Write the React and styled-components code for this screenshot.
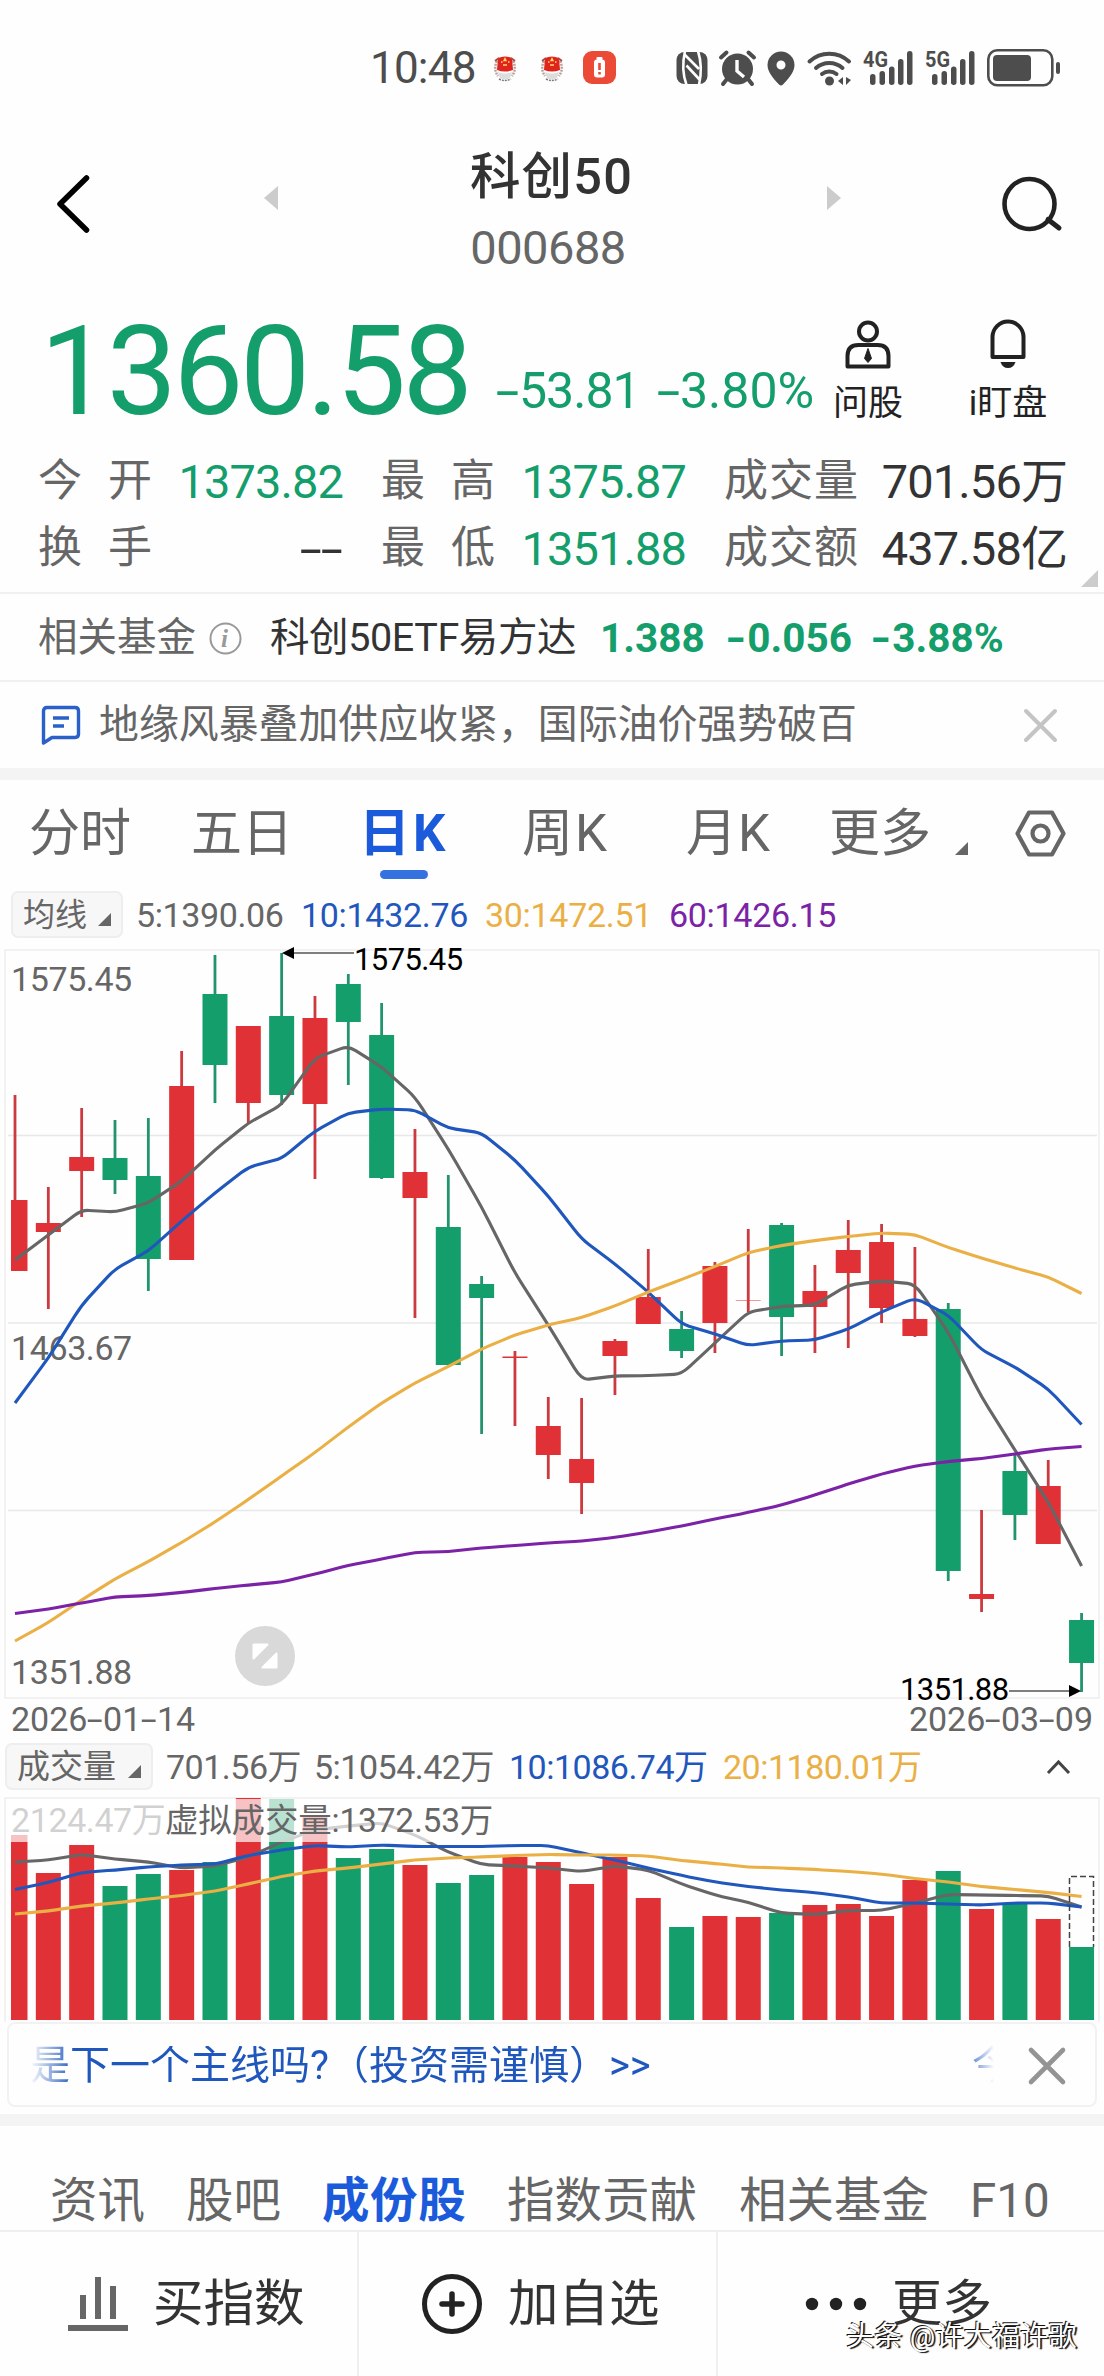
import React from 'react'
import styled, { createGlobalStyle, css } from 'styled-components'

const RED = '#e03236'
const GREEN = '#149e6b'
const BLUE = '#1f57bd'
const ORANGE = '#eab045'
const PURPLE = '#7b22a6'
const GREY = '#666'

const GlobalStyle = createGlobalStyle`
    *{
        box-sizing:border-box;
    }
    body{
        margin:0;
        background-color:#fefefe;
        font-family:Roboto, "Noto Sans CJK SC", sans-serif;
        color:#333;
    }
    svg{
        display:block;
        flex:none;
        overflow:visible;
    }
`;

const Container = styled.div`
    width:1104px;
    height:2376px;
    overflow:hidden;
    background-color:#fefefe;
`;

const Text = styled.span`
    flex:none;
    display:block;
    white-space:nowrap;
    line-height:1;
    font-size:${props => props.$size}px;
    font-weight:${props => props.$weight || 400};
    color:${props => props.$color || 'inherit'};
    letter-spacing:${props => props.$spacing || 0}px;
    width:${props => props.$width ? props.$width + 'px' : 'auto'};
`;

const Spacer = styled.div`
    flex:none;
    width:${props => props.$w}px;
`;

// minus signs are drawn wider than the font's hyphen
const Dash = styled.span`
    display:inline-block;
    width:${props => props.$wide ? 0.55 : 0.46}em;
    text-align:center;
    letter-spacing:0;
    transform:scaleX(${props => props.$wide ? 1.35 : 1.7});
`;

const Num = ({ children, wide }) => (
    <>
        {children.split('').map((c, i) => (c === '-' ? <Dash key={i} $wide={wide}>-</Dash> : c))}
    </>
)

/* ---------- status bar ---------- */

const StatusBar = styled.div`
    height:136px;
    display:flex;
    align-items:center;
    padding-left:370px;
`;
const Notifications = styled.div`
    display:flex;
    align-items:center;
    gap:23px;
    margin-left:9px;
    & > :last-child{
        margin-left:-4px;
    }
`;
const StatusIcons = styled.div`
    display:flex;
    align-items:center;
    margin-left:59px;
`;

/* ---------- header ---------- */

const Header = styled.header`
    height:152px;
    display:flex;
    align-items:flex-start;
`;
const HeaderSlot = styled.div`
    flex:none;
    width:${props => props.$width}px;
    height:${props => props.$height || 136}px;
    padding-left:${props => props.$pad}px;
    display:flex;
    align-items:center;
`;
const TitleBlock = styled.div`
    width:440px;
    flex:none;
    display:flex;
    flex-direction:column;
    align-items:center;
`;
const Title = styled.h1`
    margin:0 5px 0 0;
    font-size:50.5px;
    line-height:82px;
    font-weight:500;
    letter-spacing:1.2px;
    color:#333;
`;
const Code = styled.div`
    margin-right:12px;
    font-size:47px;
    line-height:60px;
    letter-spacing:-0.5px;
    color:#666;
`;

/* ---------- quote ---------- */

const Quote = styled.section`
    height:160px;
    display:flex;
    padding-left:40px;
    color:${GREEN};
`;
const Price = styled.div`
    flex:none;
    width:456px;
    font-size:125px;
    line-height:168px;
    letter-spacing:-3.6px;
`;
const Change = styled.div`
    flex:none;
    width:${props => props.$width}px;
    padding-top:20px;
    font-size:50px;
    line-height:167px;
    letter-spacing:${props => props.$spacing}px;
    white-space:nowrap;
`;
const QuoteAction = styled.div`
    flex:none;
    width:${props => props.$width}px;
    padding-top:${props => props.$top}px;
    display:flex;
    flex-direction:column;
    align-items:center;
    gap:17px;
    color:#222;
`;

const Stats = styled.section`
    height:146px;
    padding-left:38px;
    display:grid;
    grid-template-columns:343px 343px 380px;
    grid-template-rows:67px 67px;
    border-bottom:2px solid #f0f0f0;
    position:relative;
`;
const Stat = styled.div`
    display:flex;
    align-items:center;
`;
const StatLabel = styled.span`
    width:${props => props.$wide ? 134 : 114}px;
    margin-top:-2px;
    font-size:44px;
    line-height:1;
    color:#666;
    text-align-last:justify;
    white-space:nowrap;
    flex:none;
`;
const StatValue = styled.span`
    width:${props => props.$wide ? 209 : 191}px;
    text-align:right;
    font-size:47px;
    line-height:1;
    letter-spacing:-0.9px;
    white-space:nowrap;
    color:${props => props.$plain ? '#333' : GREEN};
`;
const Corner = styled.div`
    position:absolute;
    right:6px;
    bottom:5px;
    border-bottom:17px solid #ccc;
    border-left:17px solid transparent;
`;

/* ---------- fund & news ---------- */

const Row = styled.div`
    display:flex;
    align-items:center;
    height:86px;
    padding-left:${props => props.$left}px;
    ${props => props.$line && css`
        height:88px;
        padding-top:2px;
        border-bottom:2px solid #f0f0f0;
    `}
`;
const Band = styled.div`
    height:12px;
    background-color:#f4f4f4;
`;

/* ---------- tabs ---------- */

const PeriodTabs = styled.nav`
    height:111px;
    display:flex;
    padding-left:29px;
    color:#666;
`;
const PeriodTab = styled.div`
    flex:none;
    width:${props => props.$width}px;
    font-size:51px;
    line-height:108px;
    letter-spacing:${props => props.$spacing || 0}px;
    font-weight:${props => props.$active ? 700 : 400};
    color:${props => props.$active ? '#1b5bdb' : '#666'};
    &::after{
        content:"";
        display:${props => props.$active ? 'block' : 'none'};
        width:48px;
        height:9px;
        margin:-18px 0 0 21px;
        border-radius:5px;
        background-color:#3572e0;
    }
`;
const TabMark = styled.div`
    flex:none;
    width:${props => props.$width}px;
    padding-top:${props => props.$top}px;
`;
const Triangle = styled.i`
    display:block;
    flex:none;
    width:0;
    border-bottom:13px solid #666;
    border-left:13px solid transparent;
`;

/* ---------- indicators ---------- */

const Indicators = styled.div`
    display:flex;
    align-items:center;
    height:47px;
    padding-left:${props => props.$left}px;
    margin-bottom:${props => props.$bottom}px;
`;
const Chip = styled.div`
    flex:none;
    width:${props => props.$width}px;
    height:47px;
    display:flex;
    align-items:center;
    justify-content:space-between;
    padding:0 10px 0 10px;
    margin-right:${props => props.$gap}px;
    border:2px solid #eee;
    border-radius:7px;
    background-color:#f7f7f7;
    color:#666;
    & > i{
        margin-top:9px;
    }
`;
const Dates = styled.div`
    height:44px;
    padding:3px 11px 0 11px;
    display:flex;
    justify-content:space-between;
    color:#666;
`;

/* ---------- banner ---------- */

const Banner = styled.div`
    display:flex;
    align-items:center;
    height:85px;
    margin:0 7px 7px 7px;
    padding:2px 0 0 21px;
    border:2px solid #f2f2f2;
    border-radius:8px;
    color:${BLUE};
`;
const Marquee = styled.div`
    flex:none;
    width:964px;
    display:flex;
    mask-image:linear-gradient(90deg, transparent, #000 44px, #000 932px, transparent 964px);
`;

/* ---------- bottom ---------- */

const InfoTabs = styled.nav`
    display:flex;
    height:106px;
    padding:52px 0 0 50px;
    border-bottom:2px solid #efefef;
    color:#666;
`;
const BottomBar = styled.footer`
    display:grid;
    grid-template-columns:359px 359px 386px;
    height:144px;
    position:relative;
`;
const BottomItem = styled.div`
    display:flex;
    align-items:center;
    padding-left:${props => props.$pad}px;
    gap:${props => props.$gap}px;
    border-right:${props => props.$last ? 'none' : '2px solid #efefef'};
`;
const Watermark = styled.div`
    position:absolute;
    left:846px;
    top:91px;
    font-size:28px;
    line-height:1;
    letter-spacing:0.3px;
    white-space:nowrap;
    color:#fff;
    text-shadow:-1px -1px 0 #111, 2px 1px 1px #111;
`;

/* ---------- data ---------- */

const STEP = 33.33
const cx = i => 15 + i * STEP

// [up, high, low, bodyTop, bodyBottom]
const candles = [
    [1, 1095, 1271, 1200, 1271],
    [1, 1187, 1309, 1223, 1232],
    [1, 1108, 1217, 1157, 1171],
    [0, 1120, 1194, 1158, 1180],
    [0, 1118, 1291, 1176, 1259],
    [1, 1051, 1260, 1086, 1260],
    [0, 955, 1103, 994, 1065],
    [1, 1026, 1123, 1026, 1103],
    [0, 953, 1105, 1016, 1095],
    [1, 996, 1179, 1018, 1104],
    [0, 974, 1085, 984, 1022],
    [0, 1003, 1179, 1035, 1178],
    [1, 1129, 1318, 1172, 1198],
    [0, 1175, 1365, 1227, 1365],
    [0, 1276, 1434, 1284, 1298],
    [1, 1351, 1426, 1356.5, 1358],
    [1, 1397, 1479, 1426, 1455],
    [1, 1398, 1514, 1459, 1483],
    [1, 1339, 1395, 1341, 1356],
    [1, 1249, 1324, 1297, 1324],
    [0, 1311, 1358, 1329, 1351],
    [1, 1262, 1353, 1266, 1323],
    [1, 1229, 1312, 1300.3, 1300.8],
    [0, 1223, 1356, 1225, 1317],
    [1, 1265, 1353, 1291, 1307],
    [1, 1220, 1348, 1250, 1273],
    [1, 1224, 1323, 1242, 1308],
    [1, 1247, 1337, 1319, 1336],
    [0, 1303, 1581, 1309, 1571],
    [1, 1510, 1612, 1594, 1599],
    [0, 1455, 1540, 1471, 1515],
    [1, 1460, 1544, 1486, 1544],
    [0, 1613, 1692, 1620, 1663],
]

const priceLines = [
    [GREY, [1260, 1235, 1210, 1212, 1203, 1181, 1150, 1123, 1105, 1058, 1046, 1067, 1097, 1149, 1207, 1273, 1325, 1380, 1376, 1375.6, 1374, 1343, 1312, 1306.5, 1305, 1285, 1281, 1284, 1332, 1397, 1450, 1502, 1566]],
    [BLUE, [1403, 1358, 1305, 1269, 1251, 1221, 1193, 1167, 1158.5, 1131, 1113, 1109, 1110, 1128, 1133, 1160, 1196, 1239, 1264, 1292, 1324, 1334, 1345.5, 1341, 1340, 1329, 1312, 1298, 1315, 1350, 1367, 1389, 1424.5]],
    [ORANGE, [1641, 1622.5, 1600, 1579, 1561.5, 1542.5, 1522, 1499.5, 1476, 1452.5, 1427, 1403, 1383, 1366.5, 1349, 1335, 1325, 1317.5, 1306, 1292, 1279.5, 1266.5, 1252.5, 1245.5, 1240.5, 1236.5, 1233, 1234.5, 1247.5, 1258, 1268, 1277, 1293.5]],
    [PURPLE, [1613.5, 1609, 1603, 1597, 1595.5, 1592.5, 1588.5, 1585, 1582, 1574, 1565.5, 1559, 1552.5, 1551.5, 1548, 1545.5, 1543, 1541, 1537.5, 1532, 1526, 1519, 1512.5, 1505, 1495, 1484, 1474, 1466, 1461.5, 1458.5, 1454, 1449, 1446.5]],
]

const volumes = [1835, 1873, 1845, 1886, 1874, 1870, 1862, 1798, 1799, 1815, 1858, 1849, 1865, 1883, 1875, 1857, 1862, 1884, 1857, 1898, 1927, 1916, 1917, 1913, 1905, 1904, 1916, 1880, 1871, 1909, 1904, 1919, 1947]

const volumeLines = [
    [GREY, [1862, 1860, 1854.5, 1859, 1862, 1868, 1866, 1857, 1842, 1830, 1826, 1823, 1835, 1852, 1864.5, 1866, 1868, 1871.5, 1866, 1870, 1884, 1895, 1902.5, 1913, 1914.5, 1910.5, 1910.5, 1903, 1894.5, 1895, 1895.5, 1896, 1907]],
    [BLUE, [1889.5, 1882.5, 1872.5, 1870, 1867, 1865, 1864, 1855.5, 1850, 1845.5, 1847, 1845, 1846.5, 1846.5, 1846.5, 1845.5, 1845.5, 1853, 1860, 1868, 1875.5, 1882, 1886.5, 1890, 1892.5, 1897, 1903, 1903, 1904, 1905, 1903, 1903, 1907]],
    [ORANGE, [1914, 1911, 1906, 1903, 1899, 1895.5, 1891, 1884, 1876.5, 1871, 1868, 1864, 1860, 1858, 1857, 1855.5, 1854.5, 1855, 1855, 1856, 1860.5, 1863.5, 1867, 1868, 1869.5, 1871.5, 1874, 1878.5, 1882, 1886.5, 1889.5, 1892.5, 1896.5]],
]

// polyline whose corners are rounded a little
const linePath = ys => {
    const r = 0.22
    let d = `M${cx(0)} ${ys[0]}`
    for (let i = 1; i < ys.length - 1; i++) {
        const x = cx(i)
        d += `L${x - STEP * r} ${ys[i] - (ys[i] - ys[i - 1]) * r}`
        d += `Q${x} ${ys[i]} ${x + STEP * r} ${ys[i] + (ys[i + 1] - ys[i]) * r}`
    }
    return d + `L${cx(ys.length - 1)} ${ys[ys.length - 1]}`
}

const barBox = i => {
    const left = Math.max(cx(i) - 12.5, 11)
    return { x: left, width: cx(i) + 12.5 - left }
}

const PriceChart = () => (
    <svg width="1104" height="750" viewBox="0 949 1104 750">
        <rect x="5" y="950" width="1094" height="748" fill="none" stroke="#f2f2f2" strokeWidth="2" />
        {[1135.5, 1323, 1510.5].map(y => (
            <path key={y} d={`M8 ${y}H1097`} stroke="#e8e8e8" strokeWidth="1.4" />
        ))}
        <g fontSize="34" fill="#666" letterSpacing="-0.4">
            <text x="11" y="991">1575.45</text>
            <text x="11" y="1360">1463.67</text>
            <text x="11" y="1684">1351.88</text>
        </g>
        {candles.map(([up, high, low, top, bottom], i) => (
            <g key={i} fill={up ? RED : GREEN}>
                <rect x={cx(i) - 1.4} y={high} width="2.8" height={low - high} fill={up ? '#cc3a40' : '#23936b'} />
                <rect {...barBox(i)} y={top} height={bottom - top} />
            </g>
        ))}
        {priceLines.map(([color, ys]) => (
            <path key={color} d={linePath(ys)} fill="none" stroke={color} strokeWidth="3.1" />
        ))}
        <g stroke="#555" strokeWidth="1.6">
            <path d="M292 953H354" />
            <path d="M1009 1691H1070" />
        </g>
        <path d="M282 953l12-6v12zM1081 1691l-12-6v12z" fill="#000" />
        <g fontSize="31" fill="#000" letterSpacing="-0.6">
            <text x="354" y="970">1575.45</text>
            <text x="900" y="1700">1351.88</text>
        </g>
        <circle cx="265" cy="1656" r="30" fill="#d9d9d9" />
        <path d="M253.5 1644.5h14l-14 14zM276.5 1667.5h-14l14-14z" fill="#fff" stroke="#fff" strokeWidth="2" strokeLinejoin="round" />
    </svg>
)

const VolumeChart = () => (
    <svg width="1104" height="225" viewBox="0 1797 1104 225">
        <path d="M5 2022V1798H1099V2022" fill="none" stroke="#f2f2f2" strokeWidth="2" />
        <text x="11" y="1832" fontSize="34" fill="#666" letterSpacing="-0.4">2124.47万</text>
        {volumes.map((y, i) => (
            <rect key={i} {...barBox(i)} y={y} height={2020 - y} fill={candles[i][0] ? RED : GREEN} />
        ))}
        {volumeLines.map(([color, ys]) => (
            <path key={color} d={linePath(ys)} fill="none" stroke={color} strokeWidth="3.1" />
        ))}
        <path d="M1069.5 1947V1876.5H1093.5V1947" fill="none" stroke="#444" strokeWidth="1.5" strokeDasharray="6 3" />
        <rect x="8" y="1799" width="484" height="43" fill="#fff" fillOpacity="0.7" />
        <text x="165" y="1832" fontSize="33.5" fill="#666" letterSpacing="-0.2">虚拟成交量:1372.53万</text>
    </svg>
)

const Emblem = () => (
    <svg width="24" height="28" viewBox="0 0 24 28">
        <path d="M4 7q-4 8 1 15M20 7q4 8-1 15" fill="none" stroke="#b9a19c" strokeWidth="2.5" strokeDasharray="2 1" />
        <path d="M5 4q7-3 14 0l1 12q-8 3-16 0z" fill="#e0231c" />
        <path d="M2 7l4-3M22 7l-4-3" stroke="#b5463c" strokeWidth="2" />
        <path d="M12 4.5l1 2h-2zM8 8h1.5M15 8h1.5M10 11h4" stroke="#ffd76a" strokeWidth="1.3" />
        <path d="M5 18q7 3 14 0l-2 6q-5 3-10 0z" fill="#ddd" />
        <path d="M6 25q6 3 12 0" fill="none" stroke="#777" strokeWidth="1.5" strokeDasharray="2 1" />
    </svg>
)

const BatteryAlert = () => (
    <svg width="34" height="34" viewBox="0 0 34 34">
        <rect width="33" height="33" rx="9" fill="#ea4a36" />
        <rect x="11" y="8.5" width="11" height="18" rx="3" fill="#fff" />
        <rect x="13.5" y="6" width="6" height="3" rx="1" fill="#fff" />
        <path d="M16.5 12v7M16.5 21v2.5" stroke="#ea4a36" strokeWidth="2.6" />
    </svg>
)

const SignalBars = ({ label }) => (
    <svg width="51" height="36" viewBox="0 0 51 36" fill="#4d4d4d">
        <text x="0" y="17" fontSize="22" fontWeight="700" textLength="25" lengthAdjust="spacingAndGlyphs">{label}</text>
        {[[7, 24], [16.5, 21], [26, 16.5], [35, 9], [44, 1]].map(([x, y]) => (
            <rect key={x} x={x} y={y} width="5.5" height={35 - y} rx="2.7" />
        ))}
    </svg>
)

const NfcIcon = () => (
    <svg width="32" height="34" viewBox="0 0 32 34">
        <rect x="0.5" y="1" width="31" height="32" rx="8" fill="#4d4d4d" />
        <path d="M9 0c-2.500 11-2.500 23 1.500 34M8 3l15 15M10.500 14.500l13 14M22 0c3.500 11 3.500 23 1 34" fill="none" stroke="#fefefe" strokeWidth="2.6" />
    </svg>
)

const AlarmIcon = () => (
    <svg width="37" height="36" viewBox="0 0 37 36">
        <circle cx="18.5" cy="19" r="15.5" fill="#4d4d4d" />
        <path d="M2 7.5l5.500-5M35 7.5l-5.500-5M8 29l-4 5M29 29l4 5" stroke="#4d4d4d" strokeWidth="4" strokeLinecap="round" />
        <path d="M18 10v11l7 6" fill="none" stroke="#fefefe" strokeWidth="3.4" />
    </svg>
)

const PinIcon = () => (
    <svg width="28" height="35" viewBox="0 0 28 35">
        <path fillRule="evenodd" d="M14 .5a13.500 13.500 0 0 1 13.500 13.500c0 8-7.500 15-11.500 19.500q-2 2-4 0c-4-4.500-11.500-11.500-11.500-19.500a13.500 13.500 0 0 1 13.500-13.500zM14 9.500a4.500 4.500 0 1 0 0 9a4.500 4.500 0 1 0 0-9z" fill="#4d4d4d" />
    </svg>
)

const WifiIcon = () => (
    <svg width="45" height="36" viewBox="0 0 45 36">
        <g fill="none" stroke="#4d4d4d" strokeWidth="4" strokeLinecap="round">
            <path d="M2.5 11.5a29 29 0 0 1 39.500 0" />
            <path d="M9 18a20 20 0 0 1 26.500 0" />
            <path d="M15 24a11.500 11.500 0 0 1 14.500 0" />
        </g>
        <circle cx="22.5" cy="31" r="4.5" fill="#4d4d4d" />
        <path d="M36 27v8l-5-4zM39 27v8l5-5z" fill="#4d4d4d" />
    </svg>
)

const BatteryIcon = () => (
    <svg width="73" height="38" viewBox="0 0 73 38">
        <rect x="1.3" y="1.3" width="64" height="35" rx="9" fill="none" stroke="#4d4d4d" strokeWidth="2.6" />
        <rect x="6" y="6" width="38" height="26" rx="4" fill="#4d4d4d" />
        <rect x="69" y="13" width="4" height="12" rx="2" fill="#4d4d4d" />
    </svg>
)

const stats = [
    ['今 开', '1373.82'],
    ['最 高', '1375.87'],
    ['成交量', '701.56万', true],
    ['换 手', '--', false, true],
    ['最 低', '1351.88'],
    ['成交额', '437.58亿', true],
]

// [name, width, letter spacing]
const periods = [
    ['分时', 162],
    ['五日', 168],
    ['日K', 163, 3],
    ['周K', 164, 2],
    ['月K', 143, 1],
    ['更多', 126],
]

const infoTabs = [
    ['资讯', 136],
    ['股吧', 136],
    ['成份股', 185],
    ['指数贡献', 232],
    ['相关基金', 231],
    ['F10', 100],
]

const App = () => {
    return (
        <Container>
            <GlobalStyle />
            <StatusBar>
                <Text $size={44} $color="#4d4d4d" $width={114} $spacing={-0.8}>10:48</Text>
                <Notifications>
                    <Emblem />
                    <Emblem />
                    <BatteryAlert />
                </Notifications>
                <StatusIcons>
                    <NfcIcon />
                    <Spacer $w={11} />
                    <AlarmIcon />
                    <Spacer $w={11} />
                    <PinIcon />
                    <Spacer $w={12} />
                    <WifiIcon />
                    <Spacer $w={11} />
                    <SignalBars label="4G" />
                    <Spacer $w={11} />
                    <SignalBars label="5G" />
                    <Spacer $w={11} />
                    <BatteryIcon />
                </StatusIcons>
            </StatusBar>

            <Header>
                <HeaderSlot $width={264} $pad={56}>
                    <svg width="34" height="60" viewBox="0 0 34 60">
                        <path d="M30.5 4L4 30l26.500 26" fill="none" stroke="#000" strokeWidth="5.5" strokeLinecap="round" strokeLinejoin="round" />
                    </svg>
                </HeaderSlot>
                <HeaderSlot $width={70} $pad={0} $height={124}>
                    <svg width="14" height="24" viewBox="0 0 14 24"><path d="M14 0v24L0 12z" fill="#ccc" /></svg>
                </HeaderSlot>
                <TitleBlock>
                    <Title>科创50</Title>
                    <Code>000688</Code>
                </TitleBlock>
                <HeaderSlot $width={227} $pad={53} $height={124}>
                    <svg width="14" height="24" viewBox="0 0 14 24"><path d="M0 0v24L14 12z" fill="#ccc" /></svg>
                </HeaderSlot>
                <HeaderSlot $width={100} $pad={0}>
                    <svg width="62" height="56" viewBox="0 0 62 56">
                        <circle cx="28.5" cy="28" r="25" fill="none" stroke="#222" strokeWidth="4.6" />
                        <path d="M47 43.500l11 8.500" stroke="#222" strokeWidth="5" strokeLinecap="round" />
                    </svg>
                </HeaderSlot>
            </Header>

            <Quote>
                <Price>1360.58</Price>
                <Change $width={161} $spacing={-1}><Num>-53.81</Num></Change>
                <Change $width={167} $spacing={0}><Num>-3.80%</Num></Change>
                <QuoteAction $width={88} $top={32}>
                    <svg width="46" height="49" viewBox="0 0 46 49" fill="none" stroke="#222" strokeWidth="4">
                        <circle cx="23" cy="11.5" r="9" />
                        <path d="M2.5 46.5V36q0-11 11-11h19q11 0 11 11v10.500z" strokeLinejoin="round" />
                        <path d="M23 28.500l3.500 10-3.500 4-3.500-4z" fill="#222" strokeWidth="1" />
                    </svg>
                    <Text $size={35}>问股</Text>
                </QuoteAction>
                <QuoteAction $width={192} $top={31}>
                    <svg width="38" height="50" viewBox="0 0 38 50">
                        <path d="M3.5 38V18a15.500 15.500 0 0 1 31 0v20z" fill="none" stroke="#222" strokeWidth="4" strokeLinejoin="round" />
                        <path d="M11.5 43h15q-2 6-7.500 6t-7.500-6z" fill="#222" />
                    </svg>
                    <Text $size={35}>i盯盘</Text>
                </QuoteAction>
            </Quote>

            <Stats>
                {stats.map(([label, value, wide, plain]) => (
                    <Stat key={label}>
                        <StatLabel $wide={wide}>{label}</StatLabel>
                        <StatValue $wide={wide} $plain={wide || plain}><Num>{value}</Num></StatValue>
                    </Stat>
                ))}
                <Corner />
            </Stats>

            <Row $line $left={38}>
                <Text $size={39.5} $color="#666" $width={171}>相关基金</Text>
                <svg width="33" height="33" viewBox="0 0 33 33">
                    <circle cx="16.5" cy="16.5" r="15" fill="none" stroke="#999" strokeWidth="2" />
                    <text x="12" y="25" fontSize="25" fontFamily="Liberation Serif, serif" fontStyle="italic" fontWeight="700" fill="#999">i</text>
                </svg>
                <Spacer $w={28} />
                <Text $size={39.5} $width={330} $spacing={-0.4}>科创50ETF易方达</Text>
                <Text $size={40.5} $weight={700} $color={GREEN} $width={125}>1.388</Text>
                <Text $size={40.5} $weight={700} $color={GREEN} $width={145}><Num wide>-0.056</Num></Text>
                <Text $size={40.5} $weight={700} $color={GREEN}><Num wide>-3.88%</Num></Text>
            </Row>
            <Row $left={41}>
                <svg width="40" height="40" viewBox="0 0 40 40" fill="none" stroke="#2a60c8" strokeWidth="3.4" strokeLinejoin="round">
                    <path d="M2.5 38V6q0-3.500 3.500-3.500h28q3.500 0 3.500 3.500v23q0 3.500-3.500 3.500H11z" />
                    <path d="M12 13h16M12 21h11" />
                </svg>
                <Spacer $w={18} />
                <Text $size={39.9} $color="#666" $width={925}>地缘风暴叠加供应收紧，国际油价强势破百</Text>
                <svg width="33" height="33" viewBox="0 0 33 33">
                    <path d="M2 2l29 29M31 2L2 31" stroke="#c4c4c4" strokeWidth="4" strokeLinecap="round" />
                </svg>
            </Row>

            <Band />

            <PeriodTabs>
                {periods.map(([name, width, spacing], i) => (
                    <PeriodTab key={name} $width={width} $spacing={spacing} $active={i === 2}>{name}</PeriodTab>
                ))}
                <TabMark $width={60} $top={62}>
                    <Triangle />
                </TabMark>
                <TabMark $width={60} $top={30}>
                    <svg width="51" height="47" viewBox="1 0 51 47" fill="none" stroke="#666" strokeWidth="4.2" strokeLinejoin="round">
                        <path d="M15 2.500h23l11.500 21-11.500 21h-23l-11.500-21z" />
                        <circle cx="26.5" cy="23.5" r="8" />
                    </svg>
                </TabMark>
            </PeriodTabs>

            <Indicators $left={11} $bottom={11}>
                <Chip $width={112} $gap={13}>
                    <Text $size={32}>均线</Text>
                    <Triangle />
                </Chip>
                <Text $size={34} $color={GREY} $width={165} $spacing={-0.4}>5:1390.06</Text>
                <Text $size={34} $color={BLUE} $width={184} $spacing={-0.3}>10:1432.76</Text>
                <Text $size={34} $color={ORANGE} $width={184} $spacing={-0.3}>30:1472.51</Text>
                <Text $size={34} $color={PURPLE} $spacing={-0.3}>60:1426.15</Text>
            </Indicators>

            <PriceChart />
            <Dates>
                <Text $size={34} $spacing={0}><Num>2026-01-14</Num></Text>
                <Text $size={34} $spacing={0}><Num>2026-03-09</Num></Text>
            </Dates>

            <Indicators $left={5} $bottom={7}>
                <Chip $width={148} $gap={13}>
                    <Text $size={33}>成交量</Text>
                    <Triangle />
                </Chip>
                <Text $size={34} $color={GREY} $width={148} $spacing={-0.5}>701.56万</Text>
                <Text $size={34} $color={GREY} $width={195} $spacing={-0.5}>5:1054.42万</Text>
                <Text $size={34} $color={BLUE} $width={214} $spacing={-0.5}>10:1086.74万</Text>
                <Text $size={34} $color={ORANGE} $width={323} $spacing={-0.5}>20:1180.01万</Text>
                <svg width="24" height="16" viewBox="0 0 24 16">
                    <path d="M2 14L12.500 3 23 14" fill="none" stroke="#444" strokeWidth="3" />
                </svg>
            </Indicators>
            <VolumeChart />

            <Banner>
                <Marquee>
                    <Text $size={40} $width={942}>是下一个主线吗?（投资需谨慎）&gt;&gt;</Text>
                    <Text $size={40}>今</Text>
                </Marquee>
                <Spacer $w={35} />
                <svg width="36" height="36" viewBox="0 0 36 36">
                    <path d="M2 2l32 32M34 2L2 34" stroke="#949494" strokeWidth="4.6" strokeLinecap="round" />
                </svg>
            </Banner>

            <Band />

            <InfoTabs>
                {infoTabs.map(([name, width], i) => (
                    <Text
                        key={name}
                        $size={47.5}
                        $width={width}
                        $spacing={i === 2 ? 0.6 : 0}
                        $weight={i === 2 ? 700 : 400}
                        $color={i === 2 ? '#1b5bdb' : '#666'}
                    >
                        {name}
                    </Text>
                ))}
            </InfoTabs>

            <BottomBar>
                <BottomItem $pad={68} $gap={25}>
                    <svg width="60" height="56" viewBox="0 0 60 56" fill="#666">
                        <path d="M12 19h6v24h-6zM27 1h6v42h-6zM42 10h6v33h-6zM0 49h60v6H0z" />
                    </svg>
                    <Text $size={50.5}>买指数</Text>
                </BottomItem>
                <BottomItem $pad={62} $gap={25}>
                    <svg width="62" height="62" viewBox="0 0 62 62" fill="none" stroke="#222">
                        <circle cx="31" cy="31" r="27.5" strokeWidth="5" />
                        <path d="M31 21v20M21 31h20" strokeWidth="5.5" strokeLinecap="round" />
                    </svg>
                    <Text $size={50.5}>加自选</Text>
                </BottomItem>
                <BottomItem $pad={87} $gap={26} $last>
                    <svg width="61" height="14" viewBox="0 0 61 14" fill="#222">
                        <circle cx="7" cy="7" r="6.2" />
                        <circle cx="31" cy="7" r="6.2" />
                        <circle cx="55" cy="7" r="6.2" />
                    </svg>
                    <Text $size={50}>更多</Text>
                </BottomItem>
                <Watermark>头条 @许大福许歌</Watermark>
            </BottomBar>
        </Container>
    )
}

export default App
